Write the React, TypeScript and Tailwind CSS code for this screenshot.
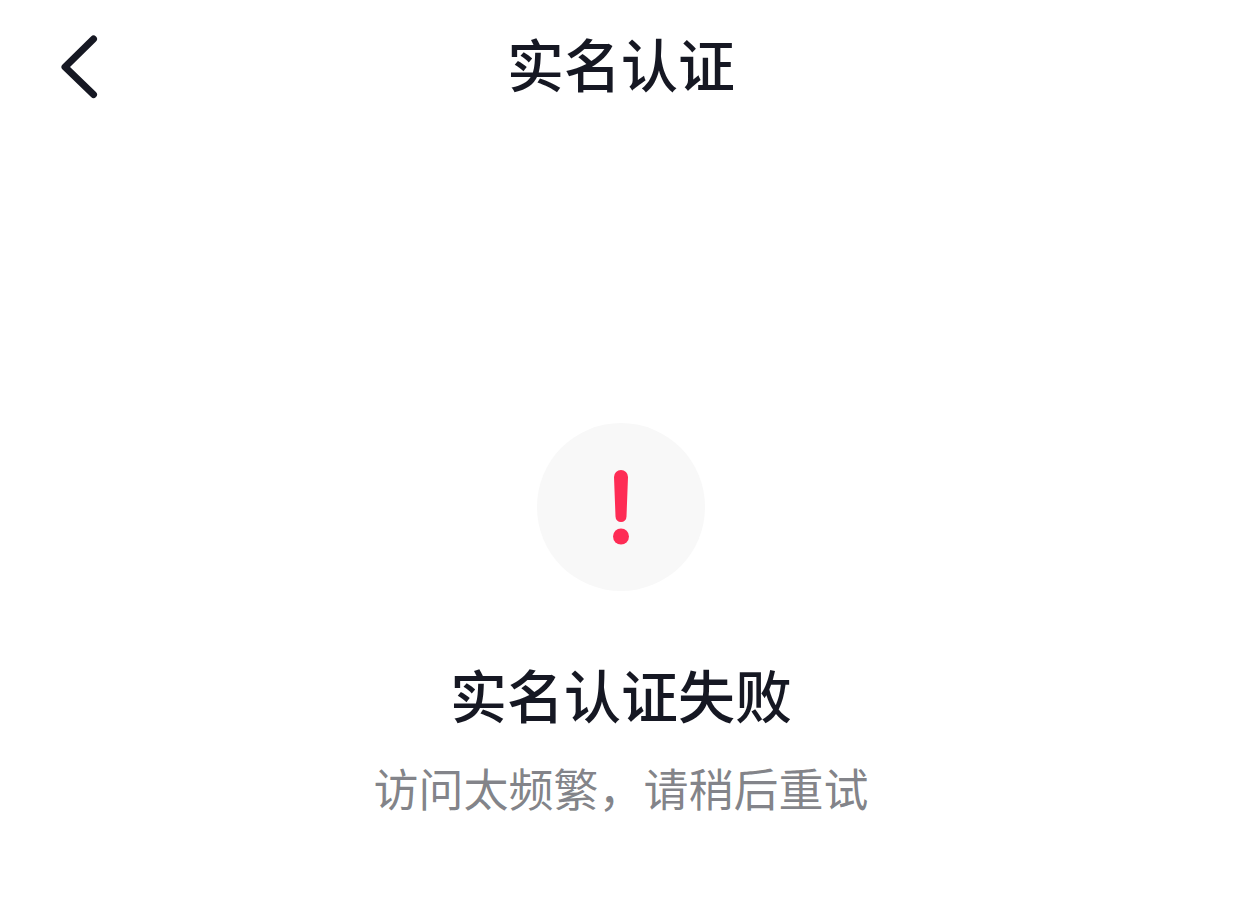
const cjk = 'font-["Noto_Sans_CJK_SC","Noto_Sans",sans-serif]'

export default function App() {
  return (
    <div className={`h-[900px] w-[1242px] overflow-hidden bg-white ${cjk}`}>
      {/* Nav bar */}
      <div className="relative flex h-[132px] items-center justify-center">
        <button className="absolute left-[60px] top-[34px]">
          <svg width="40" height="66" viewBox="0 0 40 66" fill="none">
            <path d="M33.5 5 L5 33 L33.5 60.5" stroke="#161823" strokeWidth="7" strokeLinecap="round" strokeLinejoin="round" />
          </svg>
        </button>
        <h1 className="mt-[-8px] text-[57px] font-medium leading-none text-[#161823]">实名认证</h1>
      </div>

      {/* Result */}
      <div className="flex flex-col items-center pt-[291px]">
        <div className="flex h-[168px] w-[168px] items-center justify-center rounded-full bg-[#f8f8f8]">
          <svg width="20" height="76" viewBox="0 0 20 76" fill="#fe2c55">
            <path d="M3 8 a7 7 0 0 1 14 0 L15.5 47.5 a5.5 5.5 0 0 1 -11 0 Z" />
            <circle cx="10" cy="67.5" r="8" />
          </svg>
        </div>
        <h2 className="mt-[66px] text-[57px] font-medium leading-[72px] text-[#161823]">实名认证失败</h2>
        <p className="mt-[29px] text-[45px] leading-[60px] text-[#161823]/55">{'访问太频繁\uFF0C请稍后重试'}</p>
      </div>
    </div>
  )
}
